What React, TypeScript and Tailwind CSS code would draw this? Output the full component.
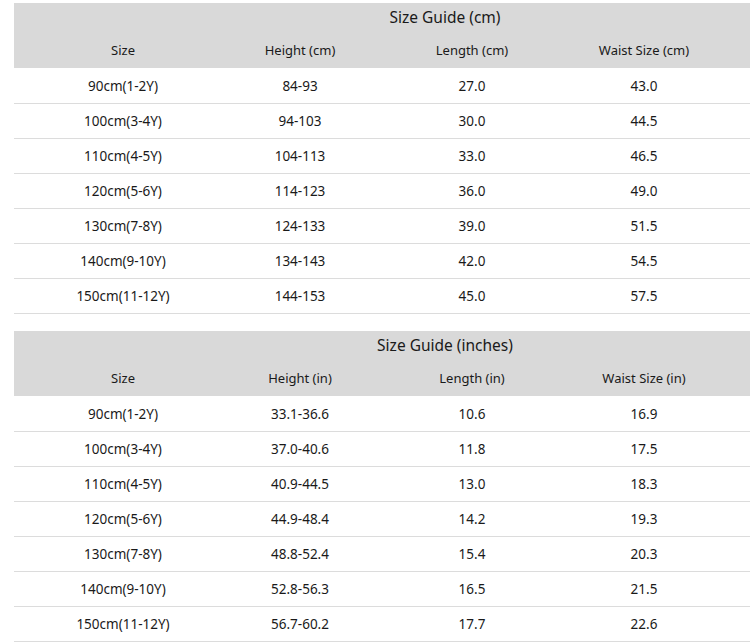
import React from "react";

const cmRows = [
  ["90cm(1-2Y)", "84-93", "27.0", "43.0"],
  ["100cm(3-4Y)", "94-103", "30.0", "44.5"],
  ["110cm(4-5Y)", "104-113", "33.0", "46.5"],
  ["120cm(5-6Y)", "114-123", "36.0", "49.0"],
  ["130cm(7-8Y)", "124-133", "39.0", "51.5"],
  ["140cm(9-10Y)", "134-143", "42.0", "54.5"],
  ["150cm(11-12Y)", "144-153", "45.0", "57.5"],
];

const inRows = [
  ["90cm(1-2Y)", "33.1-36.6", "10.6", "16.9"],
  ["100cm(3-4Y)", "37.0-40.6", "11.8", "17.5"],
  ["110cm(4-5Y)", "40.9-44.5", "13.0", "18.3"],
  ["120cm(5-6Y)", "44.9-48.4", "14.2", "19.3"],
  ["130cm(7-8Y)", "48.8-52.4", "15.4", "20.3"],
  ["140cm(9-10Y)", "52.8-56.3", "16.5", "21.5"],
  ["150cm(11-12Y)", "56.7-60.2", "17.7", "22.6"],
];

function Table({ title, heads, rows }: { title: string; heads: string[]; rows: string[][] }) {
  return (
    <div className="w-[862px]">
      <div className="bg-[#d9d9d9]">
        <div className="h-[30px] flex items-center justify-center text-[15.5px]">{title}</div>
        <div className="h-[35px] grid grid-cols-[218px_136px_208px_136px_164px] items-center text-[13px]">
          {heads.map((h, i) => (
            <div key={i} className="text-center">{h}</div>
          ))}
          <div />
        </div>
      </div>
      <div className="h-px" />
      {rows.map((r, ri) => (
        <div
          key={ri}
          className="h-[35px] grid grid-cols-[218px_136px_208px_136px_164px] items-center text-[13.5px] border-b border-[#dcdcdc]"
        >
          {r.map((c, ci) => (
            <div key={ci} className="text-center">{c}</div>
          ))}
          <div />
        </div>
      ))}
    </div>
  );
}

export default function App() {
  return (
    <div
      className="w-[750px] h-[644px] overflow-hidden bg-white text-[#1a1a1a] pt-[3px] pl-[14px]"
      style={{ fontFamily: '"Noto Sans", "Open Sans", sans-serif' }}
    >
      <Table
        title="Size Guide (cm)"
        heads={["Size", "Height (cm)", "Length (cm)", "Waist Size (cm)"]}
        rows={cmRows}
      />
      <div className="h-[17px]" />
      <Table
        title="Size Guide (inches)"
        heads={["Size", "Height (in)", "Length (in)", "Waist Size (in)"]}
        rows={inRows}
      />
    </div>
  );
}
